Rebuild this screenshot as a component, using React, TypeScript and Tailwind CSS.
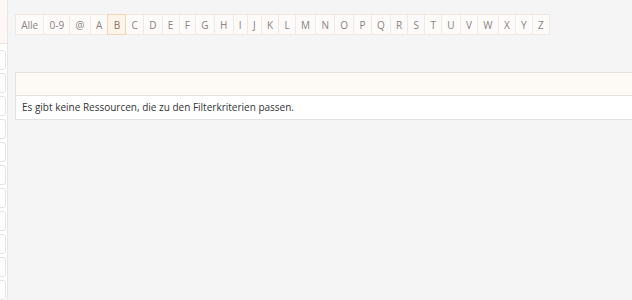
const letters = ['A', 'B', 'C', 'D', 'E', 'F', 'G', 'H', 'I', 'J', 'K', 'L', 'M', 'N', 'O', 'P', 'Q', 'R', 'S', 'T', 'U', 'V', 'W', 'X', 'Y', 'Z'];

function FilterButton({ label, active }: { label: string; active?: boolean }) {
  return (
    <button
      className={
        active
          ? 'relative z-10 -ml-px h-[21px] border border-[#f3d5b5] bg-[#fdf4ea] px-[5.2px] text-[10px] leading-none text-[#8a6f5f]'
          : '-ml-px h-[21px] border border-[#efe8e3] bg-[#fdfbf9] px-[5.2px] text-[10px] leading-none text-[#8c8080]'
      }
    >
      {label}
    </button>
  );
}

export default function App() {
  const sideItems = Array.from({ length: 11 });

  return (
    <div className="flex h-[300px] w-[632px] overflow-hidden bg-[#f5f5f5] font-['Open_Sans',sans-serif]">
      {/* Sidebar edge */}
      <aside className="flex w-[8px] shrink-0 flex-col border-r border-[#e6e6e6] bg-white">
        <div className="h-[44px] border-b border-[#f0e4dc] bg-[#fdf8f5]" />
        <div className="flex flex-col gap-[3px] pt-[6px]">
          {sideItems.map((_, i) => (
            <div key={i} className="-ml-[10px] h-[20px] w-[16px] rounded-[3px] border border-[#e3e3e3] bg-white" />
          ))}
        </div>
      </aside>

      {/* Main */}
      <main className="flex-1 pt-[14px] pl-[7px]">
        <div className="flex pl-px">
          <FilterButton label="Alle" />
          <FilterButton label="0-9" />
          <FilterButton label="@" />
          {letters.map((l) => (
            <FilterButton key={l} label={l} active={l === 'B'} />
          ))}
        </div>

        <div className="mt-[37px] -mr-px border border-[#e5e1dd] bg-white">
          <div className="h-[23px] border-b border-[#e5e1dd] bg-[#fdf9f4]" />
          <p className="h-[23px] px-[6px] pt-[4px] text-[10px] leading-[15px] text-[#333333]">
            Es gibt keine Ressourcen, die zu den Filterkriterien passen.
          </p>
        </div>
      </main>
    </div>
  );
}
